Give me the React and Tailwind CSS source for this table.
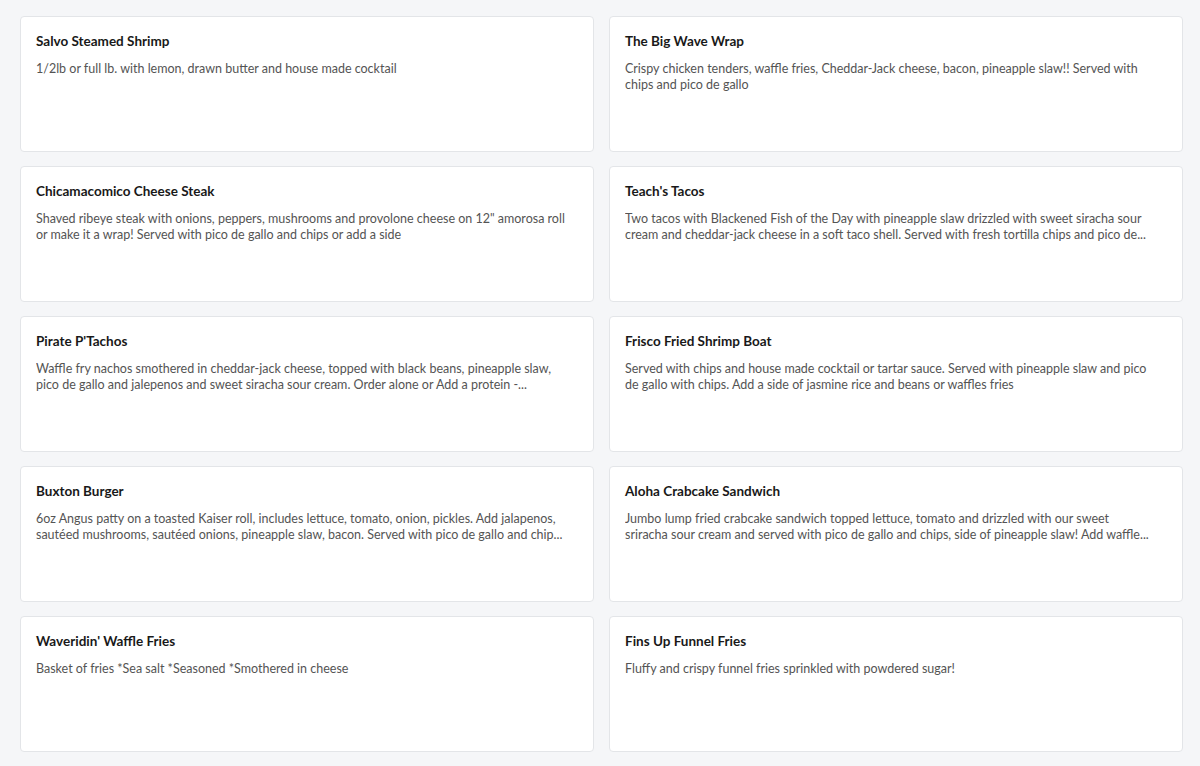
export default function App() {
  // lines are broken where the reference breaks them
  const items = [
    { name: 'Salvo Steamed Shrimp', lines: ['1/2lb or full lb. with lemon, drawn butter and house made cocktail'] },
    { name: 'The Big Wave Wrap', lines: ['Crispy chicken tenders, waffle fries, Cheddar-Jack cheese, bacon, pineapple slaw!! Served with', 'chips and pico de gallo'] },
    { name: 'Chicamacomico Cheese Steak', lines: ['Shaved ribeye steak with onions, peppers, mushrooms and provolone cheese on 12" amorosa roll', 'or make it a wrap! Served with pico de gallo and chips or add a side'] },
    { name: "Teach's Tacos", lines: ['Two tacos with Blackened Fish of the Day with pineapple slaw drizzled with sweet siracha sour', 'cream and cheddar-jack cheese in a soft taco shell. Served with fresh tortilla chips and pico de...'] },
    { name: "Pirate P'Tachos", lines: ['Waffle fry nachos smothered in cheddar-jack cheese, topped with black beans, pineapple slaw,', 'pico de gallo and jalepenos and sweet siracha sour cream. Order alone or Add a protein -...'] },
    { name: 'Frisco Fried Shrimp Boat', lines: ['Served with chips and house made cocktail or tartar sauce. Served with pineapple slaw and pico', 'de gallo with chips. Add a side of jasmine rice and beans or waffles fries'] },
    { name: 'Buxton Burger', lines: ['6oz Angus patty on a toasted Kaiser roll, includes lettuce, tomato, onion, pickles. Add jalapenos,', 'sautéed mushrooms, sautéed onions, pineapple slaw, bacon. Served with pico de gallo and chip...'] },
    { name: 'Aloha Crabcake Sandwich', lines: ['Jumbo lump fried crabcake sandwich topped lettuce, tomato and drizzled with our sweet', 'sriracha sour cream and served with pico de gallo and chips, side of pineapple slaw! Add waffle...'] },
    { name: "Waveridin' Waffle Fries", lines: ['Basket of fries *Sea salt *Seasoned *Smothered in cheese'] },
    { name: 'Fins Up Funnel Fries', lines: ['Fluffy and crispy funnel fries sprinkled with powdered sugar!'] },
  ];

  return (
    <div className="min-h-[766px] bg-[#f5f6f8] pl-5 pr-[17px] pt-4 pb-[14px]" style={{ fontFamily: 'Lato, "Noto Sans", sans-serif' }}>
      <div className="grid grid-cols-2 gap-x-[15px] gap-y-[14px]">
        {items.map((item) => (
          <div
            key={item.name}
            className="h-[136px] bg-white rounded border border-[#e3e5e8] px-[15px] pt-[14px]"
          >
            <h3 className="text-[13.5px] leading-5 font-bold text-[#191919]">{item.name}</h3>
            <div className="mt-[10px] text-[12.5px] leading-4 text-[#545454]">
              {item.lines.map((line, i) => (
                <p key={i} className="whitespace-nowrap overflow-hidden">{line}</p>
              ))}
            </div>
          </div>
        ))}
      </div>
    </div>
  );
}
